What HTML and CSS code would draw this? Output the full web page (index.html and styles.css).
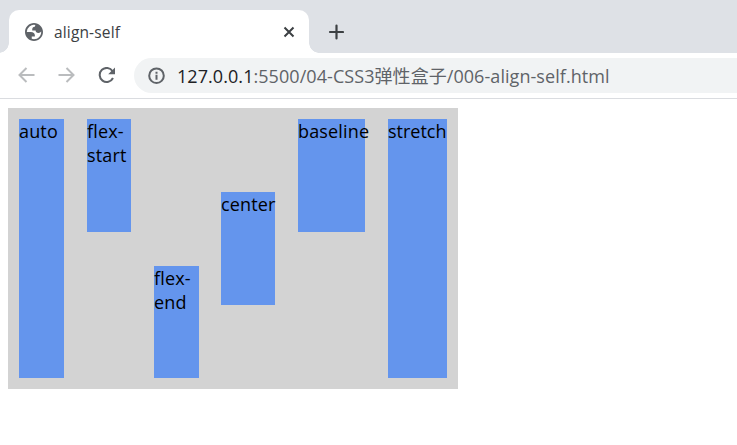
FILE: index.html
```html
<!DOCTYPE html>
<html lang="zh">
<head>
<meta charset="utf-8">
<title>align-self</title>
<link rel="stylesheet" href="styles.css">
</head>
<body>
<header class="tabs">
  <div class="tab">
    <svg class="globe" width="18" height="18" viewBox="2 2 20 20"><path fill="#5f6368" fill-rule="evenodd" d="M12 2C6.480 2 2 6.480 2 12s4.480 10 10 10 10-4.480 10-10S17.520 2 12 2zM4 12h4.400c3.407.022 4.922 1.730 4.543 5.127H9.488v2.470a8.004 8.004 0 0 0 10.498-8.083C19.327 12.504 18.332 13 17 13c-2.137 0-3.206-.916-3.206-2.750h-3.748c-.274-2.728.683-4.092 2.870-4.092 0-.975.327-1.597.811-1.970A8 8 0 0 0 4 12z"/></svg>
    <span class="title">align-self</span>
    <svg class="close" width="12" height="12" viewBox="0 0 12 12"><path d="M1.500 1.500l9 9m0-9l-9 9" stroke="#3c4043" stroke-width="2"/></svg>
  </div>
  <svg class="plus" width="16" height="16" viewBox="0 0 16 16"><path d="M8.500 1.500v13M2 8h13" stroke="#3c4043" stroke-width="2.200" stroke-linecap="round"/></svg>
</header>
<nav class="toolbar">
  <svg width="18" height="18" viewBox="0 0 18 18" fill="none" stroke="#babcbe" stroke-width="2"><path d="M16.500 8H2M8.500 1L1.500 8l7 7"/></svg>
  <svg width="18" height="18" viewBox="0 0 18 18" fill="none" stroke="#babcbe" stroke-width="2"><path d="M.5 8H15M8.500 1l7 7-7 7"/></svg>
  <svg width="18" height="18" viewBox="0 0 18 18"><path d="M14.600 4.200A7 7 0 1 0 15 11" fill="none" stroke="#5f6368" stroke-width="2"/><path d="M17 .5v6.800h-6.800z" fill="#5f6368"/></svg>
  <div class="address">
    <svg width="18" height="18" viewBox="0 0 18 18"><circle cx="8.500" cy="8.700" r="7.300" fill="none" stroke="#5f6368" stroke-width="2"/><path d="M7.500 7.700h2v5h-2zM7.500 4.700h2v2h-2z" fill="#5f6368"/></svg>
    <span class="url"><b>127.0.0.1</b>:5500/04-CSS3弹性盒子/006-align-self.html</span>
  </div>
</nav>
<main class="box">
  <div class="item auto">auto</div>
  <div class="item start">flex-start</div>
  <div class="item end">flex-end</div>
  <div class="item center">center</div>
  <div class="item baseline">baseline</div>
  <div class="item stretch">stretch</div>
</main>
</body>
</html>
```
FILE: styles.css
```css
* { box-sizing: border-box; }
body {
  margin: 0;
  background: #fff;
  color: #000;
  font: 18px/24px "Open Sans", "Noto Sans CJK SC", sans-serif;
}
svg { display: block; flex: none; }
.tabs {
  display: flex;
  height: 53px;
  padding: 10px 0 0 9px;
  background: #dee1e6;
}
.tab {
  position: relative;
  display: flex;
  align-items: center;
  width: 300px;
  height: 43px;
  padding: 0 14px 0 16px;
  border-radius: 10px 10px 0 0;
  background: #fff;
}
.tab::before,
.tab::after {
  content: "";
  position: absolute;
  bottom: 0;
  width: 10px;
  height: 10px;
}
.tab::before { right: 100%; background: radial-gradient(circle at 0 0, #dee1e6 9.5px, #fff 10px); }
.tab::after { left: 100%; background: radial-gradient(circle at 100% 0, #dee1e6 9.5px, #fff 10px); }
.title {
  margin-left: 11px;
  color: #3c4043;
  font-size: 15.5px;
  letter-spacing: 0.15px;
  white-space: nowrap;
}
.close { margin-left: auto; }
.plus { margin: 14px 0 0 19px; }
.toolbar {
  display: flex;
  align-items: center;
  gap: 22px;
  height: 46px;
  padding: 0 0 0 18px;
  border-bottom: 1px solid #dadce0;
}
.address {
  display: flex;
  flex: 1;
  align-items: center;
  height: 35px;
  margin-left: -4px;
  padding-left: 14px;
  border-radius: 18px 0 0 18px;
  background: #f1f3f4;
}
.url {
  margin-left: 11px;
  color: #5f6368;
  font-size: 18px;
  letter-spacing: 0.06px;
  white-space: nowrap;
}
.url b { color: #202124; font-weight: 400; }
.box {
  display: flex;
  gap: 23px;
  width: 450px;
  height: 281px;
  margin: 9px 0 0 8px;
  padding: 11px;
  background: #d3d3d3;
}
.item {
  flex: none;
  width: 45px;
  height: 113px;
  background: #6495ed;
  letter-spacing: 0.15px;
}
.auto, .stretch { height: auto; }
.start { align-self: flex-start; width: 44px; }
.end { align-self: flex-end; height: 112px; margin-right: -1px; }
.center { align-self: center; width: 54px; }
.baseline { align-self: baseline; width: 67px; }
.stretch { width: 59px; letter-spacing: 0; }
```
